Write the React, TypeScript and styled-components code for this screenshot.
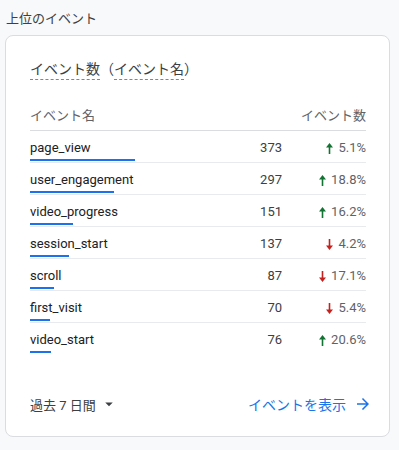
import React from 'react';
import styled, { createGlobalStyle } from 'styled-components';

const PAGE  = '#f8f9fa';
const BDR   = '#dadce0';
const TXT   = '#3c4043';
const LBL   = '#5f6368';
const BLUE  = '#1a73e8';
const UP    = '#137333';
const DOWN  = '#c5221f';
const FONT  = `Roboto, 'Noto Sans CJK JP', sans-serif`;

const Global = createGlobalStyle`
  html, body { margin: 0; padding: 0; background: #fff; }
  body { font-family: ${FONT}; }
`;

const Page = styled.div`
  background: ${PAGE};
  height: 450px;
  padding: 0 9px 0 5px;
  box-sizing: border-box;
  display: flex;
  flex-direction: column;
`;

const SectionTitle = styled.div`
  font-size: 13px;
  line-height: 20px;
  color: ${TXT};
  padding: 9px 0 6px 1px;
`;

const Card = styled.div`
  background: #fff;
  border: 1px solid ${BDR};
  border-radius: 8px;
  height: 402px;
  box-sizing: border-box;
  padding: 23px 23px 0 24px;
  display: flex;
  flex-direction: column;
`;

const CardTitle = styled.div`
  font-size: 14px;
  line-height: 20px;
  color: ${TXT};
  display: flex;
  align-items: flex-start;
`;

const Dashed = styled.span`
  display: inline-block;
  border-bottom: 1px dashed #80868b;
`;

const HeaderRow = styled.div`
  margin-top: 18px;
  height: 32px;
  display: flex;
  align-items: center;
  font-size: 13px;
  color: ${LBL};
  border-bottom: 1px solid ${BDR};
  justify-content: space-between;
`;

const Row = styled.div<{ $last?: boolean }>`
  height: 32px;
  box-sizing: border-box;
  border-bottom: 1px solid ${p => (p.$last ? 'transparent' : '#e8eaed')};
  display: flex;
  align-items: flex-start;
  font-size: 13px;
  color: ${TXT};
`;

const NameCell = styled.div`
  flex: 1;
  display: flex;
  flex-direction: column;
  padding-top: 7px;
`;

const Name = styled.div`
  line-height: 20px;
  height: 20px;
  color: #202124;
`;

const Bar = styled.div`
  height: 2px;
  margin-top: 1px;
  background: ${BLUE};
`;

const Count = styled.div`
  width: 60px;
  text-align: right;
  line-height: 20px;
  padding-top: 7px;
`;

const Change = styled.div`
  width: 84px;
  display: flex;
  justify-content: flex-end;
  align-items: center;
  gap: 5px;
  line-height: 20px;
  height: 20px;
  margin-top: 7px;
  color: ${LBL};
`;

const Spacer = styled.div`
  flex: 1;
`;

const Footer = styled.div`
  height: 60px;
  display: flex;
  align-items: center;
  justify-content: space-between;
  padding-bottom: 2px;
`;

const Period = styled.div`
  display: flex;
  align-items: center;
  gap: 4px;
  font-size: 13px;
  color: ${TXT};
`;

const ViewLink = styled.a`
  display: flex;
  align-items: center;
  gap: 8px;
  font-size: 14px;
  color: ${BLUE};
  text-decoration: none;
  margin-right: -6px;
`;

interface EventRow {
  name: string;
  count: number;
  change: number;
}

const ROWS: EventRow[] = [
  { name: 'page_view',       count: 373, change: 5.1 },
  { name: 'user_engagement', count: 297, change: 18.8 },
  { name: 'video_progress',  count: 151, change: 16.2 },
  { name: 'session_start',   count: 137, change: -4.2 },
  { name: 'scroll',          count: 87,  change: -17.1 },
  { name: 'first_visit',     count: 70,  change: -5.4 },
  { name: 'video_start',     count: 76,  change: 20.6 },
];

const MAX = 373;
const BAR_MAX = 105;

function TrendArrow({ up }: { up: boolean }) {
  return (
    <svg width="7" height="11" viewBox="0 0 7 11" style={{ transform: up ? undefined : 'rotate(180deg)' }}>
      <path d="M3.5 0 L7 4.5 H4.3 V11 H2.7 V4.5 H0 Z" fill={up ? UP : DOWN} />
    </svg>
  );
}

export default function App() {
  return (
    <>
      <Global />
      <Page>
        <SectionTitle>上位のイベント</SectionTitle>
        <Card>
          <CardTitle>
            <Dashed>イベント数</Dashed>
            <span>（</span>
            <Dashed>イベント名</Dashed>
            <span>）</span>
          </CardTitle>
          <HeaderRow>
            <span>イベント名</span>
            <span>イベント数</span>
          </HeaderRow>
          {ROWS.map((r, i) => (
            <Row key={r.name} $last={i === ROWS.length - 1}>
              <NameCell>
                <Name>{r.name}</Name>
                <Bar style={{ width: Math.round((r.count / MAX) * BAR_MAX) }} />
              </NameCell>
              <Count>{r.count}</Count>
              <Change>
                <TrendArrow up={r.change > 0} />
                <span>{Math.abs(r.change).toFixed(1)}%</span>
              </Change>
            </Row>
          ))}
          <Spacer />
          <Footer>
            <Period>
              過去 7 日間
              <svg width="18" height="18" viewBox="0 0 24 24">
                <path d="M7 10l5 5 5-5z" fill={TXT} />
              </svg>
            </Period>
            <ViewLink href="#">
              イベントを表示
              <svg width="18" height="18" viewBox="0 0 24 24">
                <path d="M12 4l-1.41 1.41L16.17 11H4v2h12.17l-5.58 5.59L12 20l8-8z" fill={BLUE} />
              </svg>
            </ViewLink>
          </Footer>
        </Card>
      </Page>
    </>
  );
}
